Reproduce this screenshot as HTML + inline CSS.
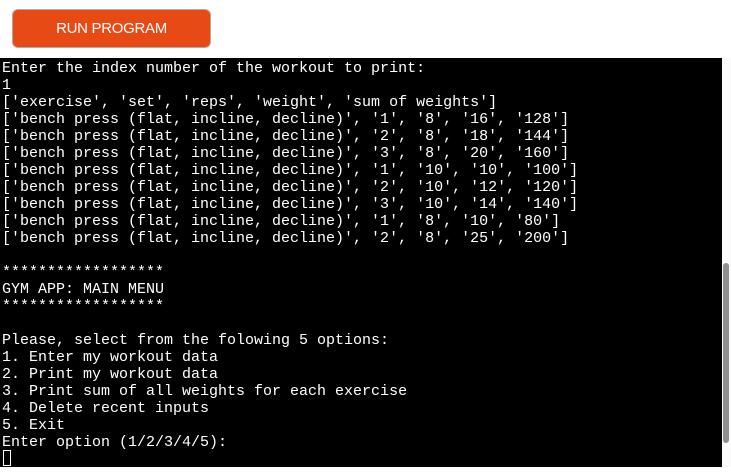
<!DOCTYPE html>
<html><head><meta charset="utf-8"><style>
body{margin:0;width:731px;height:476px;background:#fff;position:relative;overflow:hidden}
.btn{position:absolute;left:12px;top:9px;width:199px;height:39px;background:#e84a16;border:1px solid #b8a9a0;box-sizing:border-box;border-radius:6px;color:#fff;font:15px "Liberation Sans",sans-serif;text-align:center;line-height:38px;letter-spacing:-0.3px}
.term{position:absolute;left:0;top:58px;width:722px;height:409px;background:#000}
pre{margin:0;position:absolute;left:2px;top:2px;color:#fff;font:15px/17px "Liberation Mono",monospace;letter-spacing:0}
.sb{position:absolute;left:722px;top:58px;width:9px;height:409px;background:#fafafa}
.th{position:absolute;left:723px;top:263px;width:6px;height:180px;background:#8f8f8f;border-radius:3px}
.cur{position:absolute;left:3px;top:450px;width:6px;height:14px;border:1px solid #fff}
</style></head><body>
<div class="btn">RUN PROGRAM</div>
<div class="term"><pre>Enter the index number of the workout to print:
1
['exercise', 'set', 'reps', 'weight', 'sum of weights']
['bench press (flat, incline, decline)', '1', '8', '16', '128']
['bench press (flat, incline, decline)', '2', '8', '18', '144']
['bench press (flat, incline, decline)', '3', '8', '20', '160']
['bench press (flat, incline, decline)', '1', '10', '10', '100']
['bench press (flat, incline, decline)', '2', '10', '12', '120']
['bench press (flat, incline, decline)', '3', '10', '14', '140']
['bench press (flat, incline, decline)', '1', '8', '10', '80']
['bench press (flat, incline, decline)', '2', '8', '25', '200']

******************
GYM APP: MAIN MENU
******************

Please, select from the folowing 5 options:
1. Enter my workout data
2. Print my workout data
3. Print sum of all weights for each exercise
4. Delete recent inputs
5. Exit
Enter option (1/2/3/4/5):</pre></div>
<div class="cur"></div>
<div class="sb"></div><div class="th"></div>
</body></html>
